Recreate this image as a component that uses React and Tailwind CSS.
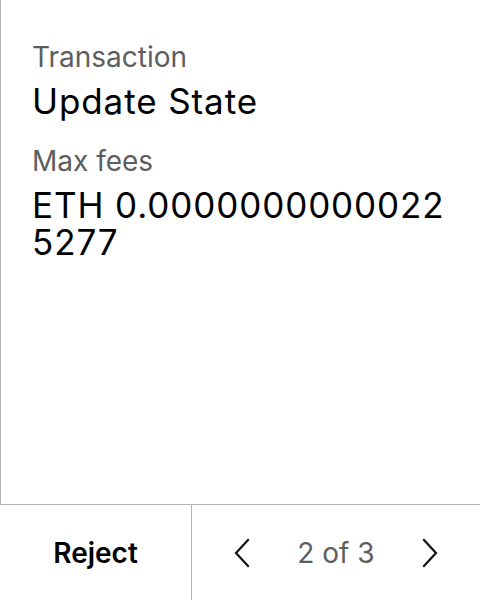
import React from 'react';

const ChevronLeft = () => (
    <svg width="20" height="32" viewBox="0 0 20 32" fill="none" stroke="#111" strokeWidth="2.2" strokeLinecap="square">
        <path d="M16 3 L4 16 L16 29" />
    </svg>
);

const ChevronRight = () => (
    <svg width="20" height="32" viewBox="0 0 20 32" fill="none" stroke="#111" strokeWidth="2.2" strokeLinecap="square">
        <path d="M4 3 L16 16 L4 29" />
    </svg>
);

const App = () => {
    return (
        <div className="w-[480px] h-[600px] flex flex-col bg-white text-black" style={{ fontFamily: 'Inter, "Noto Sans", sans-serif' }}>
            <div className="flex-1 border-l border-[#b4b4b4] pl-[31px] pt-[40px]">
                <div className="text-[28px] leading-[34px] text-[#5e5e5e]">Transaction</div>
                <div className="text-[35px] leading-[40px] tracking-[0.9px] mt-[7px]">Update State</div>
                <div className="text-[28px] leading-[34px] text-[#5e5e5e] mt-[23px]">Max fees</div>
                <div className="text-[35px] leading-[37px] tracking-[0.9px] mt-[9px]">
                    ETH 0.0000000000022<br />5277
                </div>
            </div>
            <div className="h-[96px] flex border-t border-[#b4b4b4]">
                <div className="w-[192px] border-r border-[#b4b4b4] flex items-center justify-center text-[28px] font-semibold">
                    Reject
                </div>
                <div className="flex-1 flex items-center justify-between pl-[40px] pr-[40px]">
                    <ChevronLeft />
                    <span className="text-[28px] text-[#5e5e5e]">2 of 3</span>
                    <ChevronRight />
                </div>
            </div>
        </div>
    );
};

export default App;
